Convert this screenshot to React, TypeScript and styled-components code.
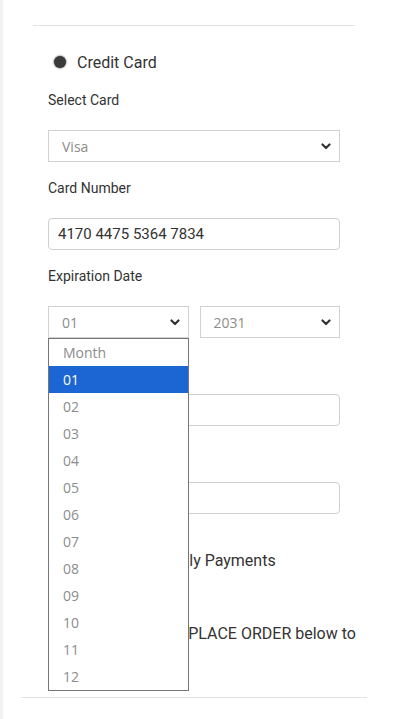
import { FC } from "react";
import styled, { createGlobalStyle } from "styled-components";

const GlobalStyle = createGlobalStyle`
  html, body {
    margin: 0;
    padding: 0;
    background: #fff;
  }
  body {
    font-family: Roboto, "Liberation Sans", sans-serif;
    color: #333;
  }
  * {
    box-sizing: border-box;
  }
`;

const Page = styled.div`
  width: 399px;
  height: 719px;
  overflow: hidden;
  border-left: 3px solid #f2f2f2;
  padding: 25px 32px 0 18px;
`;

const Section = styled.div`
  padding: 0 12px;
`;

const Rule = styled.hr<{ $top?: number }>`
  border: 0;
  border-top: 1px solid #e3e3e3;
  margin: ${({ $top }) => $top || 0}px 0 0;
  height: 0;
`;

const Form = styled.div`
  padding: 0 15px;
`;

const OptionRow = styled.div<{ $top: number }>`
  display: flex;
  align-items: center;
  gap: 11px;
  height: 24px;
  margin-top: ${({ $top }) => $top}px;
  padding-left: 21px;
  font-size: 16px;
  color: #333;
`;

const RadioDot = styled.span`
  width: 12px;
  height: 12px;
  border-radius: 50%;
  background: #3a3a3a;
  box-shadow: 0 0 1.5px 0.5px rgba(40, 40, 40, 0.6);
`;

const CheckBox = styled.span`
  width: 13px;
  height: 13px;
  margin-right: 3px;
  border: 1px solid #767676;
  border-radius: 2px;
`;

const Label = styled.div`
  margin-top: 16px;
  height: 20px;
  line-height: 20px;
  font-size: 14px;
  color: #333;
`;

const FieldRow = styled.div`
  display: flex;
  gap: 11px;
  margin-top: 20px;
`;

const SelectBox = styled.div`
  position: relative;
  flex: 1;
  height: 32px;
`;

const Select = styled.select`
  appearance: none;
  width: 100%;
  height: 32px;
  border: 1px solid #d2d2d2;
  border-radius: 0;
  background: #fff;
  padding: 0 28px 0 13px;
  font-family: "Open Sans", "Liberation Sans", sans-serif;
  font-size: 14px;
  color: #8c8c8c;
  outline: none;
`;

const Chevron = styled.svg`
  position: absolute;
  right: 9px;
  top: 13px;
  pointer-events: none;
`;

const Input = styled.input`
  display: block;
  width: 100%;
  height: 32px;
  margin-top: 20px;
  border: 1px solid #cfcfcf;
  border-radius: 4px;
  padding: 0 9px;
  font-family: Roboto, "Liberation Sans", sans-serif;
  font-size: 15px;
  color: #333;
  outline: none;
`;

const Note = styled.p`
  margin: 50px -8px 0 29px;
  font-size: 16px;
  line-height: 24px;
  color: #333;
`;

const Popup = styled.ul`
  position: absolute;
  left: 0;
  top: 32px;
  width: 141px;
  margin: 0;
  padding: 0;
  list-style: none;
  background: #fff;
  border: 1px solid #767676;
  z-index: 10;
`;

const PopupItem = styled.li<{ $active?: boolean }>`
  height: 27px;
  line-height: 27px;
  padding-left: 14px;
  font-family: "Open Sans", "Liberation Sans", sans-serif;
  font-size: 14px;
  color: ${({ $active }) => ($active ? "#fff" : "#8c8c8c")};
  background: ${({ $active }) => ($active ? "#1b66d2" : "transparent")};
`;

const months = ["01", "02", "03", "04", "05", "06", "07", "08", "09", "10", "11", "12"];

const Arrow: FC = () => (
  <Chevron width="10" height="7" viewBox="0 0 10 7">
    <path d="M1.5 1.5 L5 5 L8.5 1.5" fill="none" stroke="#333" strokeWidth="2.2" strokeLinecap="round" strokeLinejoin="round" />
  </Chevron>
);

const App: FC = () => {
  return (
    <Page>
      <GlobalStyle />
      <Section>
        <Rule />
        <OptionRow $top={24}>
          <RadioDot />
          Credit Card
        </OptionRow>
        <Form>
          <Label>Select Card</Label>
          <FieldRow>
            <SelectBox>
              <Select defaultValue="visa">
                <option value="visa">Visa</option>
                <option value="mc">MasterCard</option>
              </Select>
              <Arrow />
            </SelectBox>
          </FieldRow>

          <Label>Card Number</Label>
          <Input defaultValue="4170 4475 5364 7834" />

          <Label>Expiration Date</Label>
          <FieldRow>
            <SelectBox>
              <Select defaultValue="01">
                {months.map((m) => (
                  <option key={m} value={m}>{m}</option>
                ))}
              </Select>
              <Arrow />
              <Popup>
                <PopupItem>Month</PopupItem>
                {months.map((m) => (
                  <PopupItem key={m} $active={m === "01"}>{m}</PopupItem>
                ))}
              </Popup>
            </SelectBox>
            <SelectBox>
              <Select defaultValue="2031">
                <option value="2031">2031</option>
              </Select>
              <Arrow />
            </SelectBox>
          </FieldRow>

          <Label>CVV</Label>
          <Input />

          <Label>Name</Label>
          <Input />
        </Form>
        <OptionRow $top={34}>
          <CheckBox />
          Save for Monthly Payments
        </OptionRow>
        <Note>When ready, click PLACE ORDER below to finish.</Note>
      </Section>
      <Rule $top={27} />
    </Page>
  );
};

export default App;
